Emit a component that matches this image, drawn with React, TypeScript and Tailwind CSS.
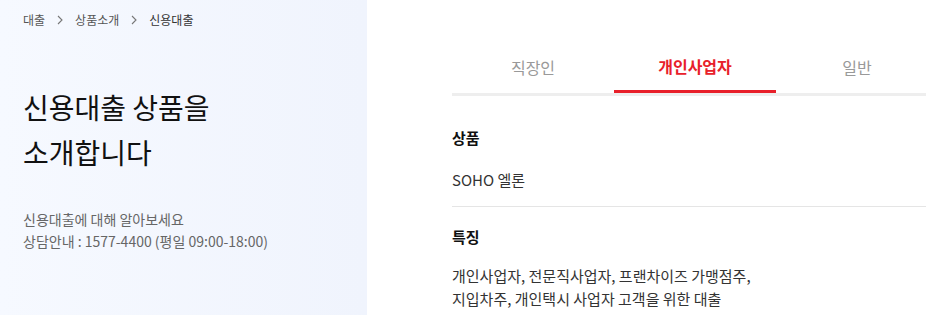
import React from "react";

const font = { fontFamily: '"Noto Sans CJK KR", "Noto Sans", sans-serif' };

const tabs = ["직장인", "개인사업자", "일반"];

function Breadcrumb() {
  const items = ["대출", "상품소개", "신용대출"];
  return (
    <nav className="flex items-center text-[12px] text-[#555]">
      {items.map((item, i) => (
        <React.Fragment key={item}>
          {i > 0 && (
            <svg width="6" height="10" viewBox="0 0 6 10" className="mx-[12px]">
              <path d="M1 1 L5 5 L1 9" fill="none" stroke="#777" strokeWidth="1.1" />
            </svg>
          )}
          <span className={i === items.length - 1 ? "text-[#333]" : ""}>{item}</span>
        </React.Fragment>
      ))}
    </nav>
  );
}

export default function App() {
  return (
    <div style={font} className="flex h-[315px] w-[926px] overflow-hidden bg-white">
      <aside className="w-[367px] shrink-0 bg-gradient-to-r from-[#f6f9ff] to-[#f0f4fd] px-[23px] pt-[11px]">
        <Breadcrumb />
        <h1 className="mt-[56px] text-[28px] leading-[45px] text-[#111]">
          신용대출 상품을
          <br />
          소개합니다
        </h1>
        <div className="mt-[33px] text-[14px] leading-[22px] text-[#666]">
          <p>신용대출에 대해 알아보세요</p>
          <p>상담안내 : 1577-4400 (평일 09:00-18:00)</p>
        </div>
      </aside>

      <main className="shrink-0 pl-[85px] pt-[53px]">
        <div className="flex w-[486px] border-b-[3px] border-[#eeeeee]">
          {tabs.map((t) => {
            const active = t === "개인사업자";
            return (
              <button
                key={t}
                className={
                  active
                    ? "-mb-[3px] h-[40px] w-[162px] border-b-[3px] border-[#e8202a] pb-[12px] text-[16px] font-bold text-[#e8202a]"
                    : "h-[40px] w-[162px] pb-[12px] text-[16px] text-[#999]"
                }
              >
                {t}
              </button>
            );
          })}
        </div>

        <section className="w-[486px] border-b border-[#e5e5e5] pt-[30px] pb-[14px]">
          <h2 className="text-[15px] font-bold leading-[24px] text-[#111]">상품</h2>
          <p className="mt-[18px] text-[15px] leading-[24px] text-[#333]">SOHO 엘론</p>
        </section>

        <section className="w-[486px] pt-[18px]">
          <h2 className="text-[15px] font-bold leading-[24px] text-[#111]">특징</h2>
          <p className="mt-[15px] text-[15px] leading-[23px] text-[#333]">
            개인사업자, 전문직사업자, 프랜차이즈 가맹점주,
            <br />
            지입차주, 개인택시 사업자 고객을 위한 대출
          </p>
        </section>
      </main>
    </div>
  );
}
